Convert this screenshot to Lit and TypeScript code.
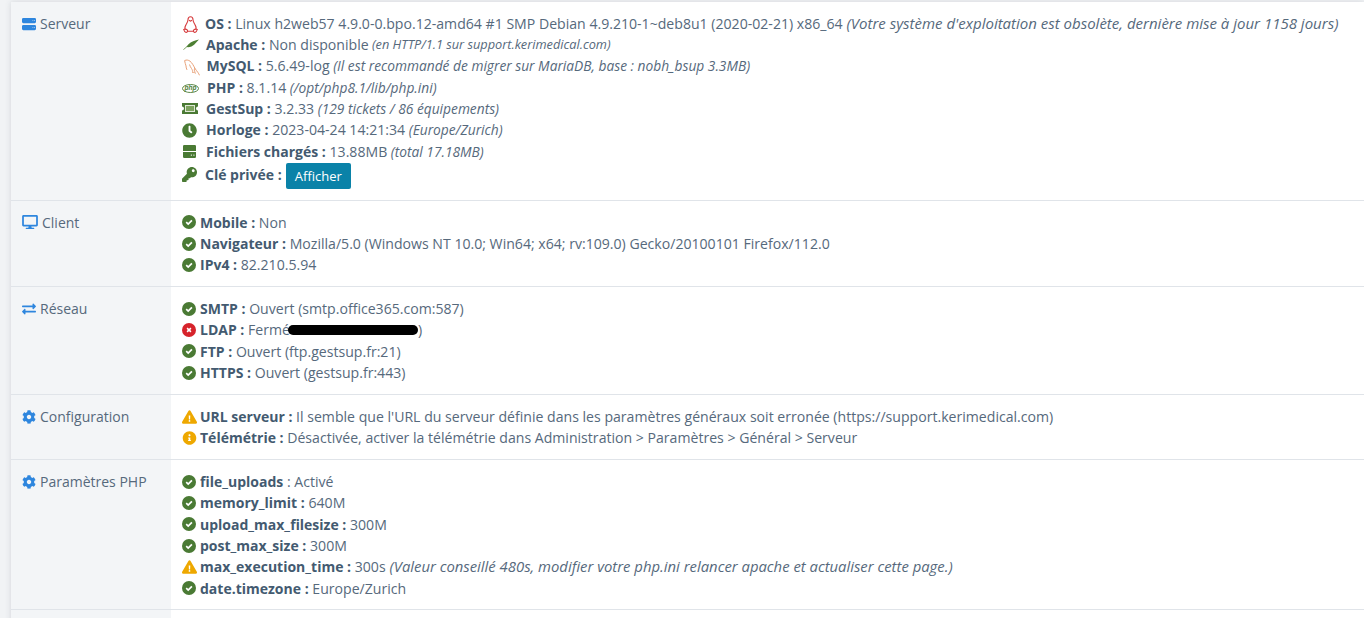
import { LitElement, html, css, svg } from "lit";
import { customElement } from "lit/decorators.js";

const P: Record<string, [string, string]> = {
  warn: ["0 0 576 512", "M569.517 440.013C587.975 472.007 564.806 512 527.94 512H48.054c-36.937 0-59.999-40.055-41.577-71.987L246.423 23.985c18.467-32.009 64.72-31.951 83.154 0l239.94 416.028zM288 374c-19 0-34 15-34 34s15 34 34 34 34-15 34-34-15-34-34-34zm-30-164l6 130c.3 5 4 9 9 9h30c5 0 8.700-4 9-9l6-130c.3-5-4-10-9-10h-42c-5 0-9.300 5-9 10z"],
  info: ["0 0 512 512", "M256 8C119.043 8 8 119.083 8 256c0 136.997 111.043 248 248 248s248-111.003 248-248C504 119.083 392.957 8 256 8zm0 110c20 0 36 16 36 36s-16 36-36 36-36-16-36-36 16-36 36-36zm50 240c0 5-4 10-10 10h-80c-6 0-10-5-10-10v-20c0-6 4-10 10-10h10v-50h-10c-6 0-10-5-10-10v-20c0-6 4-10 10-10h60c6 0 10 4 10 10v80h10c6 0 10 4 10 10v20z"],
  cog: ["0 0 512 512", "M487.4 315.7l-42.6-24.6c4.3-23.2 4.3-47 0-70.2l42.6-24.6c4.9-2.8 7.1-8.6 5.5-14-11.1-35.6-30-67.8-54.7-94.6-3.8-4.1-10-5.1-14.8-2.3L380.8 110c-17.9-15.4-38.5-27.3-60.8-35.1V25.8c0-5.6-3.9-10.5-9.4-11.7-36.7-8.2-74.3-7.8-109.2 0-5.5 1.2-9.4 6.1-9.4 11.7V75c-22.2 7.9-42.8 19.8-60.8 35.1L88.7 85.5c-4.9-2.8-11-1.9-14.8 2.3-24.7 26.7-43.6 58.9-54.7 94.6-1.7 5.4.6 11.2 5.5 14L67.3 221c-4.3 23.2-4.3 47 0 70.2l-42.6 24.6c-4.9 2.8-7.1 8.6-5.5 14 11.1 35.6 30 67.8 54.7 94.6 3.8 4.1 10 5.1 14.8 2.3l42.6-24.6c17.9 15.4 38.5 27.3 60.8 35.1v49.2c0 5.6 3.9 10.5 9.4 11.7 36.7 8.2 74.3 7.8 109.2 0 5.5-1.2 9.4-6.1 9.4-11.7v-49.2c22.2-7.9 42.8-19.8 60.8-35.1l42.6 24.6c4.9 2.8 11 1.9 14.8-2.3 24.7-26.7 43.6-58.9 54.7-94.6 1.5-5.5-.7-11.3-5.6-14.1zM256 336c-44.1 0-80-35.9-80-80s35.9-80 80-80 80 35.9 80 80-35.9 80-80 80z"],
  clock: ["0 0 512 512", "M256,8C119,8,8,119,8,256S119,504,256,504,504,393,504,256,393,8,256,8Zm92.49,313h0l-20,25a16,16,0,0,1-22.49,2.5h0l-67-49.72a40,40,0,0,1-15-31.23V112a16,16,0,0,1,16-16h32a16,16,0,0,1,16,16V256l58,42.5A16,16,0,0,1,348.49,321Z"],
  key: ["0 0 512 512", "M512 176.001C512 273.203 433.202 352 336 352c-11.22 0-22.19-1.062-32.827-3.069l-24.012 27.014A23.999 23.999 0 0 1 261.223 384H224v40c0 13.255-10.745 24-24 24h-40v40c0 13.255-10.745 24-24 24H24c-13.255 0-24-10.745-24-24v-78.059c0-6.365 2.529-12.47 7.029-16.971l161.802-161.802C163.108 213.814 160 195.271 160 176 160 78.798 238.797.001 335.999 0 433.488-.001 512 78.511 512 176.001zM336 128c0 26.51 21.49 48 48 48s48-21.49 48-48-21.49-48-48-48-48 21.49-48 48z"],
  desktop: ["0 0 576 512", "M528 0H48C21.5 0 0 21.5 0 48v320c0 26.5 21.5 48 48 48h192l-16 48h-72c-13.3 0-24 10.7-24 24s10.7 24 24 24h272c13.3 0 24-10.7 24-24s-10.7-24-24-24h-72l-16-48h192c26.5 0 48-21.5 48-48V48c0-26.5-21.5-48-48-48zm-16 352H64V64h448v288z"],
  exchange: ["0 0 512 512", "M0 168v-16c0-13.255 10.745-24 24-24h360V80c0-21.367 25.899-32.042 40.971-16.971l80 80c9.372 9.373 9.372 24.569 0 33.941l-80 80C409.956 271.982 384 261.456 384 240v-48H24c-13.255 0-24-10.745-24-24zm488 152H128v-48c0-21.314-25.862-32.08-40.971-16.971l-80 80c-9.372 9.373-9.372 24.569 0 33.941l80 80C102.057 463.997 128 453.437 128 432v-48h360c13.255 0 24-10.745 24-24v-16c0-13.255-10.745-24-24-24z"],
  servers: ["0 0 512 512", "M48 32H464A48 48 0 0 1 512 80V176A48 48 0 0 1 464 224H48A48 48 0 0 1 0 176V80A48 48 0 0 1 48 32ZM48 288H464A48 48 0 0 1 512 336V432A48 48 0 0 1 464 480H48A48 48 0 0 1 0 432V336A48 48 0 0 1 48 288ZM400 112a16 16 0 0 0 0 32a16 16 0 0 0 0-32ZM460 112a16 16 0 0 0 0 32a16 16 0 0 0 0-32ZM400 368a16 16 0 0 0 0 32a16 16 0 0 0 0-32ZM460 368a16 16 0 0 0 0 32a16 16 0 0 0 0-32Z"],
  hdd: ["0 0 512 512", "M48 0H464A48 48 0 0 1 512 48V240H0V48A48 48 0 0 1 48 0ZM0 280H512V464A48 48 0 0 1 464 512H48A48 48 0 0 1 0 464ZM330 370a28 28 0 0 0 0 56a28 28 0 0 0 0-56ZM430 370a28 28 0 0 0 0 56a28 28 0 0 0 0-56Z"],
};

const ic = (n: string, cls: string) => {
  const [vb, d] = P[n];
  return html`<svg class="ic ${cls}" viewBox=${vb} aria-hidden="true"><path fill-rule="evenodd" d=${d}></path></svg>`;
};

const okIcon = svg`<svg class="st" viewBox="0 0 14 14"><circle cx="7" cy="7" r="7" fill="#4a7a34"/><path d="M4.200 7.200 6.200 9.100 9.900 5.300" fill="none" stroke="#fff" stroke-width="1.700"/></svg>`;
const badIcon = svg`<svg class="st" viewBox="0 0 14 14"><circle cx="7" cy="7" r="7" fill="#d6232b"/><path d="M5.100 5.100 8.900 8.900M8.900 5.100 5.100 8.900" fill="none" stroke="#fff" stroke-width="1.500"/></svg>`;
const linux = svg`<svg class="b-linux" viewBox="0 0 15 17" fill="none" stroke="#d63a3c" stroke-width="1.100"><path d="M7.500.8C5.700.8 5 2.200 5 3.800c0 2-1 3-2 4.800-1 1.700-1.300 3.200-1 4.500M7.500.8c1.800 0 2.500 1.400 2.500 3 0 2 1 3 2 4.800 1 1.700 1.300 3.200 1 4.500"/><path d="M6 4.200 7.500 5.200 9 4.200"/><path d="M.7 13.400c1.200-.6 2.600-.3 3.800.8.400 1.300-.3 2.200-1.500 2.200-1.200-.1-1.900-1.500-2.300-3ZM14.300 13.400c-1.200-.6-2.600-.3-3.800.8-.4 1.300.3 2.200 1.500 2.200 1.200-.1 1.900-1.500 2.300-3ZM5 15.300h5"/></svg>`;
const feather = svg`<svg class="b-feather" viewBox="0 0 16 11"><path fill="#4d7f33" d="M16 .6C12 1.200 8 2.800 5.500 5.300 4.500 6.300 3.800 7.200 3.400 8c3 .5 6-.5 8-2.500C13.200 3.700 14.700 2 16 .6Z"/><path d="M4.300 7.300.4 10.700" stroke="#6d9a52" stroke-width=".9" fill="none"/></svg>`;
const dolphin = svg`<svg class="b-dolphin" viewBox="0 0 16 17" fill="none" stroke="#e9a279" stroke-width="1"><path d="M.6 1.600C2.400.6 4.400 1 6 2.200c2.200 1.700 3.400 4.300 4.800 6.900.8 1.600 2.100 2.900 3 4.200.7 1 1.300 2 1.700 3"/><path d="M.6 1.600c.2 2.200 1.100 3.600 1.400 5.300.2 1.300.2 2.700 1 4M5.500 5.500c.5 1.800 1.200 2.700 2 4 .9 1.400 1.300 2.700 1 4 1.300-.2 2.600.1 3.500 1M10.800 9.100c-.7 1.300-.7 2.800.4 4.100"/></svg>`;
const phpIcon = svg`<svg class="b-php" viewBox="0 0 17 9"><ellipse cx="8.500" cy="4.500" rx="8" ry="4" fill="#fff" stroke="#4a7a34" stroke-width=".9"/><text x="8.500" y="6.400" text-anchor="middle" font-family="Liberation Sans, sans-serif" font-size="6.500" font-style="italic" font-weight="700" fill="#4a7a34">php</text></svg>`;
const ticket = svg`<svg class="b-ticket" viewBox="0 0 16 11"><path fill="#4a7a34" d="M0 0H16V3.500A2 2 0 0 0 16 7.500V11H0V7.500A2 2 0 0 0 0 3.500Z"/><rect x="3.500" y="2.500" width="9" height="6" fill="#7da35f" stroke="#dfe8d6" stroke-width="1"/></svg>`;

type Note = [string, string];

@customElement("app-root")
export class AppRoot extends LitElement {
  static styles = css`
    :host { display: block; height: 618px; overflow: hidden; background: #f1f3f5; font-family: "Open Sans", sans-serif; font-size: 14px; color: #56697c; }
    .card { margin-left: 11px; margin-top: 2px; box-shadow: 0 0 6px rgba(60, 70, 90, .16); }
    .row { display: grid; grid-template-columns: 160px 1fr; background: #fff; border-bottom: 1px solid #e0e4e9; }
    .head { background: #f3f5f7; padding: 11px 0 0 11px; display: flex; align-items: flex-start; gap: 4px; line-height: 21px; }
    .body { padding: 10.800px 0 10.700px 12px; }
    .line { height: 21.330px; line-height: 21.330px; white-space: nowrap; display: flex; align-items: center; }
    .lab { font-weight: 700; color: #435a70; white-space: pre; }
    .val { white-space: pre; font-size: 14.100px; }
    .note { font-style: italic; white-space: pre; }
    .n12 { font-size: 12.750px; }
    .n13 { font-size: 13.750px; }
    .n15 { font-size: 15px; }
    .n14 { font-size: 14.850px; }
    .ic { fill: currentColor; flex: none; }
    .hi { width: 14px; height: 14px; margin-top: 3.500px; color: #2e86de; }
    .hi.wide { width: 16px; margin-right: 0; }
    .st { width: 14px; height: 14px; margin: 0 4px 0 -1px; flex: none; }
    .warn { color: #eea800; }
    .st.warn { width: 15px; margin: 0 3px 0 -1px; }
    .gi { width: 15px; height: 15px; margin: 0 9px 0 -1px; color: #4a7a34; }
    .gi.k { margin: -2px 8px 0 -1px; }
    .gi.h { height: 13px; }
    .b-linux { width: 15px; height: 17px; margin: 2px 7px 0 0; flex: none; }
    .b-feather { width: 16px; height: 11px; margin: 0 7px 0 0; flex: none; }
    .b-dolphin { width: 16px; height: 17px; margin: 2px 6.500px 0 1px; flex: none; }
    .b-php { width: 17px; height: 9px; margin: 3px 8px 0 -1px; flex: none; }
    .b-ticket { width: 16px; height: 11px; margin: 0 8px 0 -1px; flex: none; }
    .btn { margin-left: 4px; background: #0a82a8; color: #fff; border: none; border-radius: 2px; font: 13px "Open Sans", sans-serif; height: 26px; width: 65px; padding: 0; display: inline-flex; align-items: center; justify-content: center; }
    .tall { height: 27px; }
    .tall .lab { margin-top: -2px; }
    .redact { display: inline-block; width: 130px; height: 10px; border-radius: 5px; background: #000; margin-left: -2px; }
    .php .body { padding-bottom: 10.400px; }
  `;

  private note(n?: Note) {
    return n ? html`<span class="note ${n[1]}"> ${n[0]}</span>` : "";
  }

  private st(kind: string) {
    if (kind === "ok") return okIcon;
    if (kind === "bad") return badIcon;
    return ic(kind === "warn" ? "warn" : "info", "st warn");
  }

  private line(kind: string, lab: string, val: string, n?: Note) {
    return html`<div class="line">${this.st(kind)}<span class="lab">${lab}</span><span class="val"> ${val}</span>${this.note(n)}</div>`;
  }

  private gline(icon: unknown, lab: string, val: string, n?: Note) {
    return html`<div class="line">${icon}<span class="lab">${lab}</span><span class="val"> ${val}</span>${this.note(n)}</div>`;
  }

  render() {
    return html`<div class="card">
      <div class="row">
        <div class="head">${ic("servers", "hi")}<span>Serveur</span></div>
        <div class="body">
          ${this.gline(linux, "OS :", "Linux h2web57 4.9.0-0.bpo.12-amd64 #1 SMP Debian 4.9.210-1~deb8u1 (2020-02-21) x86_64", ["(Votre système d'exploitation est obsolète, dernière mise à jour 1158 jours)", "n15"])}
          ${this.gline(feather, "Apache :", "Non disponible", ["(en HTTP/1.1 sur support.kerimedical.com)", "n12"])}
          ${this.gline(dolphin, "MySQL :", "5.6.49-log", ["(Il est recommandé de migrer sur MariaDB, base : nobh_bsup 3.3MB)", "n13"])}
          ${this.gline(phpIcon, "PHP :", "8.1.14", ["(/opt/php8.1/lib/php.ini)", "n13"])}
          ${this.gline(ticket, "GestSup :", "3.2.33", ["(129 tickets / 86 équipements)", "n13"])}
          ${this.gline(ic("clock", "gi"), "Horloge :", "2023-04-24 14:21:34", ["(Europe/Zurich)", "n13"])}
          ${this.gline(ic("hdd", "gi h"), "Fichiers chargés :", "13.88MB", ["(total 17.18MB)", "n13"])}
          <div class="line tall">${ic("key", "gi k")}<span class="lab">Clé privée :</span><button class="btn">Afficher</button></div>
        </div>
      </div>
      <div class="row">
        <div class="head">${ic("desktop", "hi wide")}<span>Client</span></div>
        <div class="body">
          ${this.line("ok", "Mobile :", "Non")}
          ${this.line("ok", "Navigateur :", "Mozilla/5.0 (Windows NT 10.0; Win64; x64; rv:109.0) Gecko/20100101 Firefox/112.0")}
          ${this.line("ok", "IPv4 :", "82.210.5.94")}
        </div>
      </div>
      <div class="row">
        <div class="head">${ic("exchange", "hi")}<span>Réseau</span></div>
        <div class="body">
          ${this.line("ok", "SMTP :", "Ouvert (smtp.office365.com:587)")}
          <div class="line">${this.st("bad")}<span class="lab">LDAP :</span><span class="val"> Fermé</span><span class="redact"></span><span class="val">)</span></div>
          ${this.line("ok", "FTP :", "Ouvert (ftp.gestsup.fr:21)")}
          ${this.line("ok", "HTTPS :", "Ouvert (gestsup.fr:443)")}
        </div>
      </div>
      <div class="row">
        <div class="head">${ic("cog", "hi")}<span>Configuration</span></div>
        <div class="body">
          ${this.line("warn", "URL serveur :", "Il semble que l'URL du serveur définie dans les paramètres généraux soit erronée (https://support.kerimedical.com)")}
          ${this.line("info", "Télémétrie :", "Désactivée, activer la télémétrie dans Administration > Paramètres > Général > Serveur")}
        </div>
      </div>
      <div class="row php">
        <div class="head">${ic("cog", "hi")}<span>Paramètres PHP</span></div>
        <div class="body">
          <div class="line">${this.st("ok")}<span class="lab">file_uploads</span><span class="val"> : Activé</span></div>
          ${this.line("ok", "memory_limit :", "640M")}
          ${this.line("ok", "upload_max_filesize :", "300M")}
          ${this.line("ok", "post_max_size :", "300M")}
          ${this.line("warn", "max_execution_time :", "300s", ["(Valeur conseillé 480s, modifier votre php.ini relancer apache et actualiser cette page.)", "n14"])}
          ${this.line("ok", "date.timezone :", "Europe/Zurich")}
        </div>
      </div>
      <div class="row"><div class="head"></div><div class="body"></div></div>
    </div>`;
  }
}
